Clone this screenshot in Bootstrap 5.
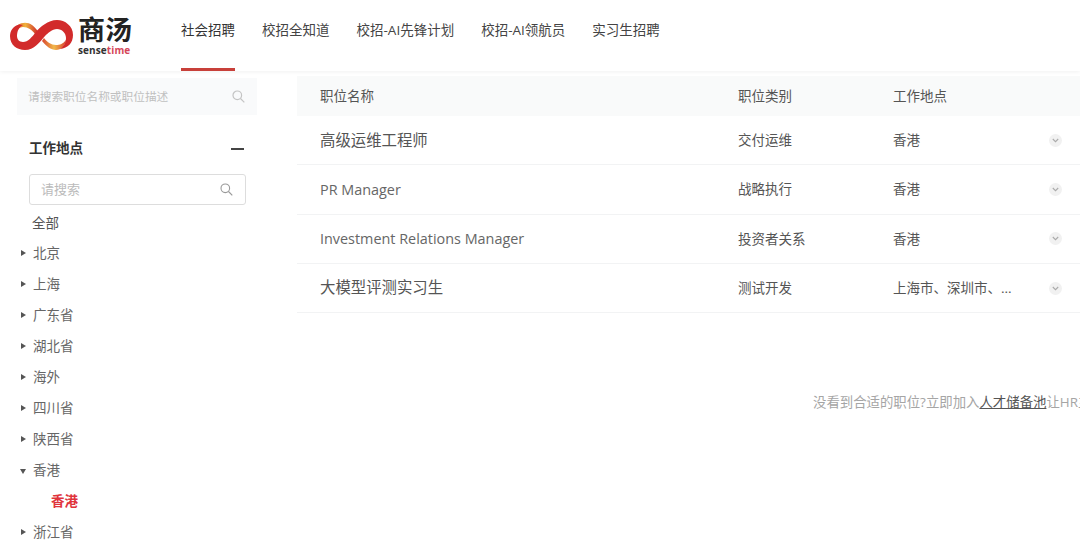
<!DOCTYPE html>
<html lang="zh-CN">
<head>
<meta charset="utf-8">
<title>商汤 招聘</title>
<link rel="stylesheet" href="https://cdn.jsdelivr.net/npm/bootstrap@5.3.0/dist/css/bootstrap.min.css">
<style>
html,body{height:553px;overflow:hidden;}
body{font-family:"Open Sans","Noto Sans CJK SC",sans-serif;color:#555;font-size:13.5px;background:#fff;}
.topbar{height:71px;box-shadow:0 1px 4px rgba(0,0,0,.06);padding:0 0 0 10px;}
.brand{width:171px;gap:5px;}
.brand-name{font-size:27px;font-weight:700;line-height:26px;color:#222;font-family:"Noto Sans CJK SC",sans-serif;}
.brand-en{font-size:10px;font-weight:700;line-height:10px;color:#333;margin-top:3px;letter-spacing:.1px;}
.brand-en span{color:#d5475a;}
.topnav{gap:27px;height:71px;}
.topnav a{color:#444;font-size:13.5px;text-decoration:none;height:71px;line-height:61px;border-bottom:3px solid transparent;}
.topnav a.on{border-bottom-color:#c8403a;color:#333;}
.sidepane{width:297px;flex:none;padding:7px 0 0 0;}
.job-search{margin-left:17px;width:240px;height:37px;background:#f9fafb;padding:0 12px 0 11px;color:#c0c0c0;font-size:11.7px;}
.filter-head{margin:24px 0 0 29px;width:217px;padding-right:2px;font-weight:700;color:#333;height:19px;}
.dash{width:13px;height:2px;background:#444;}
.filter-input{margin:16px 0 0 29px;width:217px;height:31px;border:1px solid #ddd;border-radius:3px;padding:0 12px 0 11px;color:#bbb;font-size:13px;}
.tree{margin:3px 0 0 0;padding:0;list-style:none;}
.tree li{height:31px;line-height:31px;padding-left:33px;position:relative;color:#666;}
.tree li.first{height:30px;line-height:30px;padding-left:32px;color:#555;}
.tri{position:absolute;left:21px;top:12px;width:0;height:0;border-left:5px solid #555;border-top:3.5px solid transparent;border-bottom:3.5px solid transparent;}
.tri.open{left:20px;top:14px;border-top:5px solid #555;border-left:3.5px solid transparent;border-right:3.5px solid transparent;border-bottom:0;}
.tree li.leaf{padding-left:51px;color:#e0343c;font-weight:700;}
.mainpane{flex:1;min-width:0;padding-top:5px;overflow:hidden;}
.job-row{display:grid;grid-template-columns:418px 155px 155px 1fr;padding-left:23px;align-items:center;height:49.3px;border-bottom:1px solid #f2f3f4;}
.job-row.head{height:40px;background:#f9fafa;border-bottom:0;color:#555;}
.job-title{font-size:15.4px;color:#555;}
.job-title.lat{font-size:14.4px;color:#666;}
.chev{width:13px;height:13px;border-radius:50%;background:#f1f1f1;margin-left:1px;}
.more-tip{margin:80px 0 0 516px;white-space:nowrap;color:#a5a5a5;font-size:13.4px;line-height:18px;}
.more-tip a{color:#555;}
</style>
</head>
<body>
<header class="topbar d-flex align-items-center">
  <div class="brand d-flex align-items-center">
    <svg width="63" height="31" viewBox="0 0 63 31" aria-hidden="true">
      <defs>
        <linearGradient id="gy" x1="0" y1="0" x2="1" y2="0"><stop offset="0" stop-color="#e0682c"/><stop offset=".4" stop-color="#efb23c"/><stop offset="1" stop-color="#cf2b2a"/></linearGradient>
        <linearGradient id="gz" x1="0" y1="0" x2="1" y2="0"><stop offset="0" stop-color="#d9452e"/><stop offset=".5" stop-color="#f0b84a"/><stop offset="1" stop-color="#d9452e"/></linearGradient>
      </defs>
      <path d="M8 5C12 2 18 2 22 5C24 6.500 26 9 28 11L25 14C22 10 18 7 13 7C11 7 9 8 7 10Z" fill="url(#gy)"/>
      <path d="M34 18C37 22 41 25 46 25C50 25 53 24 56 20C55 26 51 30 46 30C41 30 36 26 32 21Z" fill="url(#gz)"/>
      <path d="M9 4.500C3 6 0 11 0 16C0 25 7 30 15 30C24 30 30 22 35 16C38 13 42 9 47 9C52 9 56 13 56 18C56 23 53 27 50 29C58 28 63 23 63 15C63 6 55 0 47 0C38 0 30 7 26 12C22 17 18 22 13 22C9 22 7 19 7 16C7 11 9 7 13 5Z" fill="#d22b2b"/>
    </svg>
    <div>
      <div class="brand-name">商汤</div>
      <div class="brand-en">sense<span>time</span></div>
    </div>
  </div>
  <nav class="topnav nav">
    <a class="on" href="#">社会招聘</a>
    <a href="#">校招全知道</a>
    <a href="#">校招-AI先锋计划</a>
    <a href="#">校招-AI领航员</a>
    <a href="#">实习生招聘</a>
  </nav>
</header>
<div class="d-flex">
  <aside class="sidepane">
    <div class="job-search d-flex align-items-center justify-content-between">
      <span>请搜索职位名称或职位描述</span>
      <svg width="13" height="13" viewBox="0 0 13 13" fill="none" stroke="#c4c4c4" stroke-width="1.2"><circle cx="5.300" cy="5.300" r="4.300"/><path d="M8.500 8.500l3.800 3.800"/></svg>
    </div>
    <div class="filter-head d-flex align-items-center justify-content-between"><span>工作地点</span><span class="dash"></span></div>
    <div class="filter-input d-flex align-items-center justify-content-between">
      <span>请搜索</span>
      <svg width="13" height="13" viewBox="0 0 13 13" fill="none" stroke="#999" stroke-width="1.100"><circle cx="5.300" cy="5.300" r="4.300"/><path d="M8.500 8.500l3.800 3.800"/></svg>
    </div>
    <ul class="tree">
      <li class="first">全部</li>
      <li><i class="tri"></i>北京</li>
      <li><i class="tri"></i>上海</li>
      <li><i class="tri"></i>广东省</li>
      <li><i class="tri"></i>湖北省</li>
      <li><i class="tri"></i>海外</li>
      <li><i class="tri"></i>四川省</li>
      <li><i class="tri"></i>陕西省</li>
      <li><i class="tri open"></i>香港</li>
      <li class="leaf">香港</li>
      <li><i class="tri"></i>浙江省</li>
    </ul>
  </aside>
  <main class="mainpane">
    <div class="job-row head"><span>职位名称</span><span>职位类别</span><span>工作地点</span><span></span></div>
    <div class="job-row"><span class="job-title">高级运维工程师</span><span>交付运维</span><span>香港</span><span class="chev d-flex align-items-center justify-content-center"><svg width="7" height="5" viewBox="0 0 7 5" fill="none" stroke="#aaa" stroke-width="1.100"><path d="M.8 1l2.700 2.700L6.200 1"/></svg></span></div>
    <div class="job-row"><span class="job-title lat">PR Manager</span><span>战略执行</span><span>香港</span><span class="chev d-flex align-items-center justify-content-center"><svg width="7" height="5" viewBox="0 0 7 5" fill="none" stroke="#aaa" stroke-width="1.100"><path d="M.8 1l2.700 2.700L6.200 1"/></svg></span></div>
    <div class="job-row"><span class="job-title lat">Investment Relations Manager</span><span>投资者关系</span><span>香港</span><span class="chev d-flex align-items-center justify-content-center"><svg width="7" height="5" viewBox="0 0 7 5" fill="none" stroke="#aaa" stroke-width="1.100"><path d="M.8 1l2.700 2.700L6.200 1"/></svg></span></div>
    <div class="job-row"><span class="job-title">大模型评测实习生</span><span>测试开发</span><span>上海市、深圳市、...</span><span class="chev d-flex align-items-center justify-content-center"><svg width="7" height="5" viewBox="0 0 7 5" fill="none" stroke="#aaa" stroke-width="1.100"><path d="M.8 1l2.700 2.700L6.200 1"/></svg></span></div>
    <div class="more-tip">没看到合适的职位?立即加入<a href="#">人才储备池</a>让HR主动联系你</div>
  </main>
</div>
<script src="https://cdn.jsdelivr.net/npm/bootstrap@5.3.0/dist/js/bootstrap.bundle.min.js"></script>
</body>
</html>
